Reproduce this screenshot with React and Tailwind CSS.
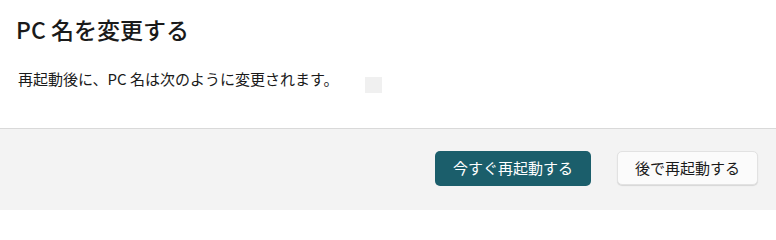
import React from "react";

const font = {
  fontFamily: '"Noto Sans CJK JP", "Noto Sans", sans-serif',
};

const RenameDialog = () => {
  return (
    <div className="w-[776px] h-[210px] flex flex-col bg-white text-[#1a1a1a]" style={font}>
      <div className="h-[129px] px-4 pt-[13px] border-b border-[#d9d9d9]">
        <h1 className="text-[23px] leading-[32px] font-medium">PC 名を変更する</h1>
        <div className="mt-[23px] pl-[2px] flex items-start gap-[27px]">
          <p className="text-[15px] leading-[22px]">
            再起動後に、PC 名は次のように変更されます。
          </p>
          <span className="mt-[9px] w-[17px] h-[16px] bg-[#f0f0f0]" />
        </div>
      </div>
      <div className="flex-1 bg-[#f3f3f3] flex items-start justify-end gap-[26px] pt-[22px] pr-[18px]">
        <button className="w-[156px] h-[35px] rounded-[5px] bg-[#1b5e6b] text-white text-[15px]">
          今すぐ再起動する
        </button>
        <button className="w-[141px] h-[34px] rounded-[5px] bg-[#fbfbfb] border border-[#e2e2e2] shadow-[0_1px_1px_rgba(0,0,0,0.12)] text-[15px]">
          後で再起動する
        </button>
      </div>
    </div>
  );
};

export default RenameDialog;
